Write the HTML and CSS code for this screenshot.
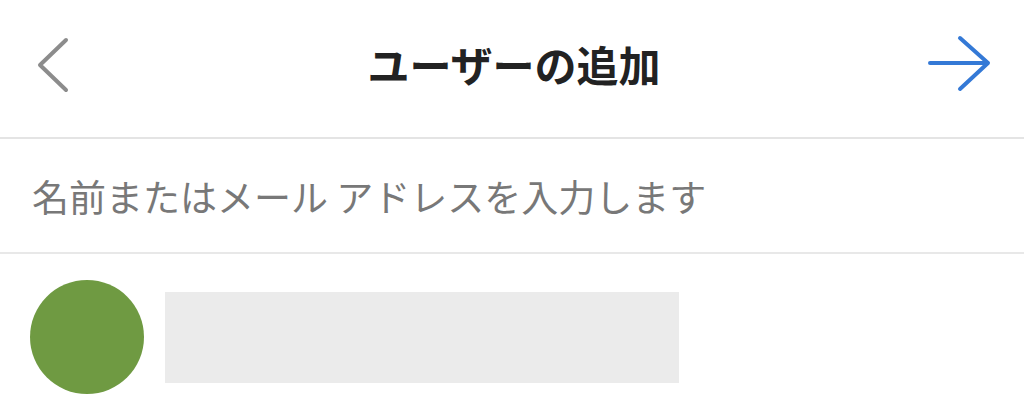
FILE: index.html
```html
<!DOCTYPE html>
<html lang="ja">
<head>
  <meta charset="UTF-8" />
  <meta name="viewport" content="width=device-width, initial-scale=1.0" />
  <title>ユーザーの追加</title>
  <link rel="stylesheet" href="styles.css">
</head>
<body>
  <div class="header">
    <svg class="back" width="34" height="58" viewBox="0 0 34 58">
      <path d="M30 5 L4 30 L30 55" fill="none" stroke="#8c8c8c" stroke-width="4" stroke-linecap="round" stroke-linejoin="round" />
    </svg>
    <h1>ユーザーの追加</h1>
    <svg class="next" width="64" height="58" viewBox="0 0 64 58">
      <path d="M2 28 H60 M32 3 L60 28 L32 54" fill="none" stroke="#3479d6" stroke-width="4" stroke-linecap="round" stroke-linejoin="round" />
    </svg>
  </div>

  <div class="search">
    <input type="text" placeholder="名前またはメール アドレスを入力します">
  </div>

  <div class="user-row">
    <div class="avatar"></div>
    <div class="name-bar"></div>
  </div>
</body>
</html>
```

FILE: styles.css
```css
* {
  box-sizing: border-box;
}
body {
  margin: 0;
  background-color: #fff;
  font-family: "Noto Sans CJK JP", "Noto Sans", sans-serif;
}
.header {
  display: grid;
  grid-template-columns: 1fr auto 1fr;
  align-items: center;
  height: 139px;
  padding: 0 32px 9px 36px;
  border-bottom: 2px solid #e4e4e4;
}
.back {
  justify-self: start;
}
.next {
  justify-self: end;
}
h1 {
  margin: 0;
  font-size: 42px;
  line-height: 1;
  font-weight: bold;
  color: #222;
}
.search {
  display: flex;
  align-items: center;
  height: 115px;
  padding-left: 32px;
  border-bottom: 2px solid #e8e8e8;
}
.search input {
  width: 100%;
  border: none;
  outline: none;
  padding: 0;
  font-family: "Noto Sans CJK JP", "Noto Sans", sans-serif;
  font-size: 37px;
  color: #333;
}
.search input::placeholder {
  color: #787878;
}
.user-row {
  display: flex;
  align-items: center;
  gap: 21px;
  padding: 26px 0 0 30px;
}
.avatar {
  width: 114px;
  height: 114px;
  border-radius: 50%;
  background-color: #6f9a42;
}
.name-bar {
  width: 514px;
  height: 91px;
  background-color: #ebebeb;
}
```
